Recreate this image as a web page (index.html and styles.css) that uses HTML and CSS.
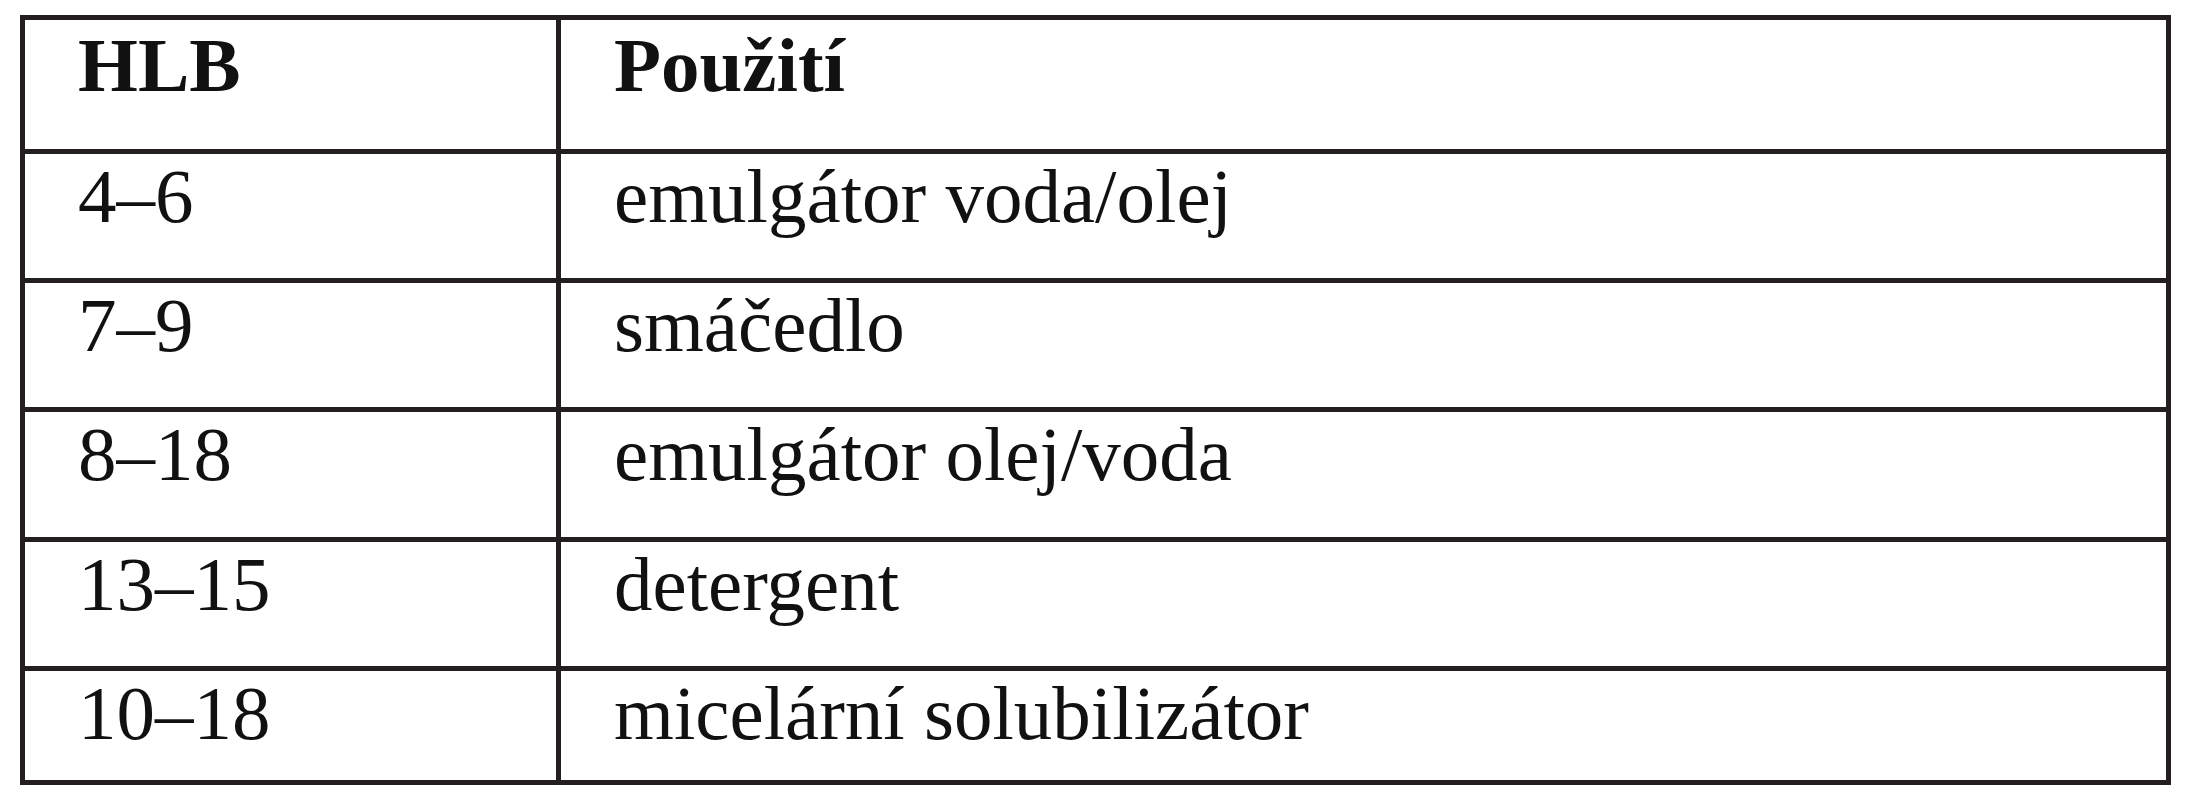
FILE: index.html
```html
<!DOCTYPE html>
<html lang="cs">
<head>
<meta charset="utf-8">
<title>HLB</title>
<link rel="stylesheet" href="styles.css">
</head>
<body>
<div class="hlb-table">
  <div class="cell head">HLB</div>
  <div class="cell head">Použití</div>
  <div class="cell">4–6</div>
  <div class="cell">emulgátor voda/olej</div>
  <div class="cell">7–9</div>
  <div class="cell">smáčedlo</div>
  <div class="cell">8–18</div>
  <div class="cell">emulgátor olej/voda</div>
  <div class="cell">13–15</div>
  <div class="cell">detergent</div>
  <div class="cell">10–18</div>
  <div class="cell">micelární solubilizátor</div>
</div>
</body>
</html>
```
FILE: styles.css
```css
html, body {
  margin: 0;
  padding: 0;
  background: #ffffff;
}

body {
  padding: 15px 0 0 20px;
}

.hlb-table {
  display: grid;
  grid-template-columns: 531px 1605px;
  grid-template-rows: 129px 124px 124px 125px 124px 109px;
  gap: 5px;
  padding: 5px;
  width: 2141px;
  box-sizing: border-box;
  width: 2151px;
  background: #231f20;
}

.cell {
  background: #ffffff;
  color: #111111;
  font-family: "Liberation Serif", "Times New Roman", serif;
  font-size: 77px;
  line-height: 1.1;
  padding: 0 0 0 53px;
  white-space: nowrap;
}

.cell.head {
  font-weight: bold;
  padding-top: 3px;
}
```
